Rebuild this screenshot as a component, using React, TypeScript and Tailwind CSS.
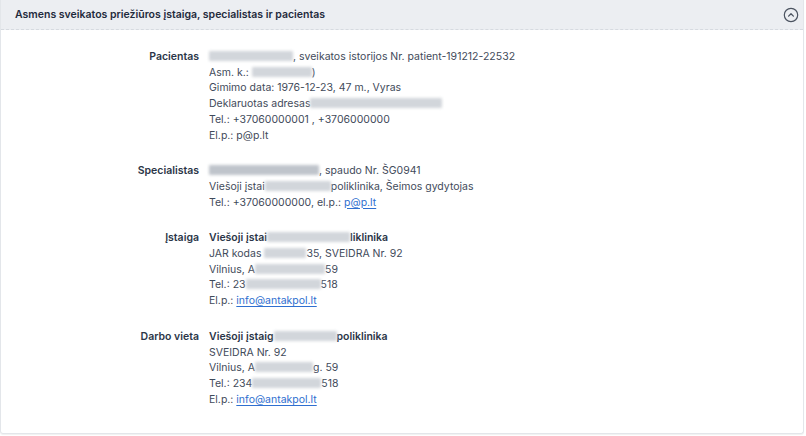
import React from "react";

const Blur = ({ w, bold }: { w: number; bold?: boolean }) => (
  <span
    className={`inline-block h-[10px] align-[-1px] rounded-[1px] blur-[1.5px] ${bold ? "bg-[#bfc4cb]" : "bg-[#d2d6db]"}`}
    style={{ width: w }}
  />
);

const Link = ({ children }: { children: React.ReactNode }) => (
  <a className="text-[#2f6fd0] underline underline-offset-[2px] decoration-[1px]">{children}</a>
);

const Row = ({ label, children }: { label: string; children: React.ReactNode }) => (
  <div className="flex">
    <div className="w-[198px] shrink-0 text-right font-semibold text-[#2b3648]">{label}</div>
    <div className="pl-[10px] text-[#3f4a5a]">{children}</div>
  </div>
);

export default function App() {
  return (
    <div className="w-[806px] h-[436px] bg-white" style={{ fontFamily: "Inter, 'Noto Sans', sans-serif" }}>
      <div className="w-[804px] h-[434px] border border-t-0 border-[#e3e6ea] rounded-b-[3px] shadow-[0_1px_1px_rgba(0,0,0,0.06)] flex flex-col">
        <div className="h-[30px] bg-[#eceef2] border-b border-dashed border-[#d6dae0] flex items-center justify-between pl-[14px] pr-[4px]">
          <div className="text-[10.5px] font-semibold text-[#1f2a3c]">
            Asmens sveikatos priežiūros įstaiga, specialistas ir pacientas
          </div>
          <svg width="16" height="16" viewBox="0 0 16 16" fill="none" className="text-[#4b5360]">
            <circle cx="8" cy="8" r="6.7" stroke="currentColor" strokeWidth="1.2" />
            <path d="M5.6 9.1 L8 6.8 L10.4 9.1" stroke="currentColor" strokeWidth="1.3" strokeLinecap="round" strokeLinejoin="round" />
          </svg>
        </div>
        <div className="pt-[19px] text-[10.5px] leading-[15.7px] flex flex-col gap-[20px]">
          <Row label="Pacientas">
            <div><Blur w={84} />, sveikatos istorijos Nr. patient-191212-22532</div>
            <div>Asm. k.: <Blur w={60} />)</div>
            <div>Gimimo data: 1976-12-23, 47 m., Vyras</div>
            <div>Deklaruotas adresas<Blur w={132} /></div>
            <div>Tel.: +37060000001 , +3706000000</div>
            <div>El.p.: p@p.lt</div>
          </Row>
          <Row label="Specialistas">
            <div><span className="font-semibold"><Blur w={110} bold /></span>, spaudo Nr. ŠG0941</div>
            <div>Viešoji įstai<Blur w={66} />poliklinika, Šeimos gydytojas</div>
            <div>Tel.: +37060000000, el.p.: <Link>p@p.lt</Link></div>
          </Row>
          <Row label="Įstaiga">
            <div className="font-semibold text-[#2b3648]">Viešoji įstai<Blur w={83} />liklinika</div>
            <div>JAR kodas <Blur w={42} />35, SVEIDRA Nr. 92</div>
            <div>Vilnius, A<Blur w={70} />59</div>
            <div>Tel.: 23<Blur w={75} />518</div>
            <div>El.p.: <Link>info@antakpol.lt</Link></div>
          </Row>
          <Row label="Darbo vieta">
            <div className="font-semibold text-[#2b3648]">Viešoji įstaig<Blur w={63} />poliklinika</div>
            <div>SVEIDRA Nr. 92</div>
            <div>Vilnius, A<Blur w={58} />g. 59</div>
            <div>Tel.: 234<Blur w={69} />518</div>
            <div>El.p.: <Link>info@antakpol.lt</Link></div>
          </Row>
        </div>
      </div>
    </div>
  );
}
